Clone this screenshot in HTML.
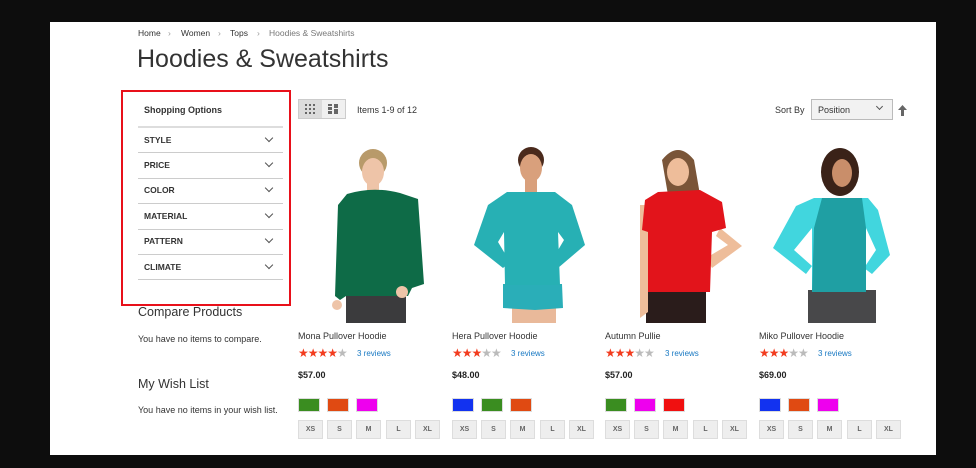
<!DOCTYPE html>
<html><head><meta charset="utf-8"><style>
*{margin:0;padding:0;box-sizing:border-box}
body{width:976px;height:468px;background:#0d0d0d;font-family:"Liberation Sans",sans-serif;color:#333;position:relative;overflow:hidden}
#pg{position:absolute;left:50px;top:22px;width:886px;height:433px;background:#fff}
.a{position:absolute;white-space:nowrap}
.crumb{top:28px;font-size:8.5px;color:#333}
.f{font-size:8.5px;font-weight:bold;color:#333}
.line{position:absolute;left:138px;width:145px;height:1px;background:#ccc}
.chev{position:absolute;left:266px;width:6px;height:6px;border-right:1.3px solid #555;border-bottom:1.3px solid #555;transform:rotate(45deg)}
.nm{font-size:9px;color:#333}
.rv{font-size:8px;color:#1979c3}
.pr{font-size:9px;font-weight:bold;color:#222}
.sw{position:absolute;width:22px;height:14px;top:398px;border:1px solid #ddd}
.sz{position:absolute;width:25px;height:19px;top:420px;background:#eee;border:1px solid #ddd;font-size:7px;font-weight:bold;color:#666;text-align:center;line-height:17px}
.st{font-size:12px;letter-spacing:-1px;color:#f23c1f}
</style></head><body>
<div id="pg"></div>
<div class="a crumb" style="left:138px">Home</div>
<div class="a crumb" style="left:168px;color:#999">›</div>
<div class="a crumb" style="left:181px">Women</div>
<div class="a crumb" style="left:218px;color:#999">›</div>
<div class="a crumb" style="left:230px">Tops</div>
<div class="a crumb" style="left:257px;color:#999">›</div>
<div class="a crumb" style="left:269px;color:#777">Hoodies &amp; Sweatshirts</div>
<div class="a" style="left:137px;top:45px;font-size:25px;color:#333;font-weight:300">Hoodies &amp; Sweatshirts</div>

<div class="a" style="left:121px;top:90px;width:170px;height:216px;border:2px solid #e8101a"></div>
<div class="a" style="left:144px;top:105px;font-size:9px;font-weight:bold;color:#333">Shopping Options</div>
<div class="line" style="top:126px;height:2px;background:#ddd"></div>
<div class="a f" style="left:144px;top:135px">STYLE</div><div class="chev" style="top:135px"></div>
<div class="line" style="top:152px"></div>
<div class="a f" style="left:144px;top:160px">PRICE</div><div class="chev" style="top:160px"></div>
<div class="line" style="top:178px"></div>
<div class="a f" style="left:144px;top:185px">COLOR</div><div class="chev" style="top:185px"></div>
<div class="line" style="top:203px"></div>
<div class="a f" style="left:144px;top:211px">MATERIAL</div><div class="chev" style="top:211px"></div>
<div class="line" style="top:229px"></div>
<div class="a f" style="left:144px;top:236px">PATTERN</div><div class="chev" style="top:236px"></div>
<div class="line" style="top:254px"></div>
<div class="a f" style="left:144px;top:262px">CLIMATE</div><div class="chev" style="top:262px"></div>
<div class="line" style="top:279px"></div>

<div class="a" style="left:138px;top:305px;font-size:12.5px;color:#333">Compare Products</div>
<div class="a" style="left:138px;top:334px;font-size:9px">You have no items to compare.</div>
<div class="a" style="left:138px;top:377px;font-size:12.5px;color:#333">My Wish List</div>
<div class="a" style="left:138px;top:405px;font-size:9px">You have no items in your wish list.</div>

<div class="a" style="left:298px;top:99px;width:48px;height:20px;border:1px solid #ccc;background:#f0f0f0"></div>
<div class="a" style="left:299px;top:100px;width:23px;height:18px;background:#dcdcdc"></div>
<svg class="a" style="left:305px;top:104px" width="10" height="10"><g fill="#666"><rect x="0" y="0" width="2" height="2"/><rect x="4" y="0" width="2" height="2"/><rect x="8" y="0" width="2" height="2"/><rect x="0" y="4" width="2" height="2"/><rect x="4" y="4" width="2" height="2"/><rect x="8" y="4" width="2" height="2"/><rect x="0" y="8" width="2" height="2"/><rect x="4" y="8" width="2" height="2"/><rect x="8" y="8" width="2" height="2"/></g></svg>
<svg class="a" style="left:328px;top:104px" width="10" height="10"><g fill="#666"><rect x="0" y="0" width="4" height="2"/><rect x="6" y="0" width="4" height="4"/><rect x="0" y="3" width="4" height="3"/><rect x="6" y="5" width="4" height="5"/><rect x="0" y="7" width="4" height="3"/></g></svg>
<div class="a" style="left:357px;top:105px;font-size:9px">Items 1-9 of 12</div>
<div class="a" style="left:775px;top:105px;font-size:9px">Sort By</div>
<div class="a" style="left:811px;top:99px;width:82px;height:21px;border:1px solid #bbb;background:#f2f2f2;font-size:9px;padding:5px 6px">Position</div>
<div class="a" style="left:877px;top:104px;width:5px;height:5px;border-right:1px solid #555;border-bottom:1px solid #555;transform:rotate(45deg)"></div>
<svg class="a" style="left:898px;top:105px" width="9" height="11"><path d="M4.5 0 L9 5 H6 V11 H3 V5 H0Z" fill="#666"/></svg>

<svg class="a" style="left:0;top:0" width="976" height="468">
<rect x="346" y="290" width="60" height="33" fill="#3b3b3d"/>
<ellipse cx="373" cy="163" rx="14" ry="14" fill="#b89a6a"/>
<ellipse cx="373" cy="172" rx="11" ry="14" fill="#eec4a8"/>
<rect x="367" y="182" width="12" height="12" fill="#eec4a8"/>
<path d="M347 194 Q373 186 400 193 L418 199 L424 284 L412 288 L408 296 L346 296 L340 300 L335 296 L338 205 Z" fill="#0e6b47"/>
<circle cx="337" cy="305" r="5" fill="#eec4a8"/><circle cx="402" cy="292" r="6" fill="#eec4a8"/>
<rect x="512" y="305" width="44" height="18" fill="#e9b99a"/>
<path d="M503 284 H562 L563 308 L535 310 L503 308 Z" fill="#2aaeb8"/>
<ellipse cx="531" cy="160" rx="13" ry="13" fill="#4a2a1c"/>
<ellipse cx="531" cy="168" rx="11" ry="14" fill="#d9a07c"/>
<rect x="525" y="178" width="12" height="14" fill="#d9a07c"/>
<path d="M507 192 L555 192 L572 205 L585 245 L558 268 L551 262 L564 240 L558 232 L560 285 L505 285 L504 232 L498 242 L510 262 L503 268 L474 245 L488 205 Z" fill="#27b0b4"/>
<rect x="646" y="290" width="60" height="33" fill="#2a1c1b"/>
<path d="M662 160 Q678 140 694 160 L706 230 L690 232 L680 195 L668 195 Z" fill="#7a5538"/>
<ellipse cx="678" cy="172" rx="11" ry="14" fill="#eebd9a"/>
<path d="M640 205 L648 205 L648 312 L640 318 Z" fill="#eebd9a"/>
<path d="M720 228 L742 246 L712 268 L706 258 L728 245 L716 236 Z" fill="#eebd9a"/>
<path d="M658 192 L700 190 L722 202 L726 228 L712 232 L710 292 L648 292 L648 232 L642 230 L645 200 Z" fill="#e2141b"/>
<rect x="808" y="290" width="68" height="33" fill="#48484a"/>
<ellipse cx="840" cy="172" rx="19" ry="24" fill="#3a2218"/>
<ellipse cx="842" cy="173" rx="10" ry="14" fill="#c98e6a"/>
<path d="M814 198 L868 198 L878 210 L890 255 L872 274 L864 268 L876 250 L866 228 L866 292 L812 292 L812 228 L794 250 L812 266 L806 274 L773 248 L796 206 Z" fill="#41d6de"/>
<path d="M822 198 L862 198 L866 228 L866 292 L812 292 L814 228 Z" fill="#1f9fa3"/>
</svg>

<div class="a nm" style="left:298px;top:331px">Mona Pullover Hoodie</div>
<div class="a nm" style="left:452px;top:331px">Hera Pullover Hoodie</div>
<div class="a nm" style="left:605px;top:331px">Autumn Pullie</div>
<div class="a nm" style="left:759px;top:331px">Miko Pullover Hoodie</div>
<div class="a st" style="left:298px;top:346px">★★★★<span style="color:#bbb">★</span></div>
<div class="a st" style="left:452px;top:346px">★★★<span style="color:#bbb">★★</span></div>
<div class="a st" style="left:605px;top:346px">★★★<span style="color:#bbb">★★</span></div>
<div class="a st" style="left:759px;top:346px">★★★<span style="color:#bbb">★★</span></div>
<div class="a rv" style="left:357px;top:349px">3 reviews</div>
<div class="a rv" style="left:511px;top:349px">3 reviews</div>
<div class="a rv" style="left:665px;top:349px">3 reviews</div>
<div class="a rv" style="left:818px;top:349px">3 reviews</div>
<div class="a pr" style="left:298px;top:370px">$57.00</div>
<div class="a pr" style="left:452px;top:370px">$48.00</div>
<div class="a pr" style="left:605px;top:370px">$57.00</div>
<div class="a pr" style="left:759px;top:370px">$69.00</div>

<div class="sw" style="left:298px;background:#3a8d20"></div><div class="sw" style="left:327px;background:#e04a12"></div><div class="sw" style="left:356px;background:#ee00ee"></div>
<div class="sw" style="left:452px;background:#1232f0"></div><div class="sw" style="left:481px;background:#3a8d20"></div><div class="sw" style="left:510px;background:#e04a12"></div>
<div class="sw" style="left:605px;background:#3a8d20"></div><div class="sw" style="left:634px;background:#ee00ee"></div><div class="sw" style="left:663px;background:#f01010"></div>
<div class="sw" style="left:759px;background:#1232f0"></div><div class="sw" style="left:788px;background:#e04a12"></div><div class="sw" style="left:817px;background:#ee00ee"></div>

<div class="sz" style="left:298px">XS</div><div class="sz" style="left:327px">S</div><div class="sz" style="left:356px">M</div><div class="sz" style="left:386px">L</div><div class="sz" style="left:415px">XL</div>
<div class="sz" style="left:452px">XS</div><div class="sz" style="left:481px">S</div><div class="sz" style="left:510px">M</div><div class="sz" style="left:540px">L</div><div class="sz" style="left:569px">XL</div>
<div class="sz" style="left:605px">XS</div><div class="sz" style="left:634px">S</div><div class="sz" style="left:663px">M</div><div class="sz" style="left:693px">L</div><div class="sz" style="left:722px">XL</div>
<div class="sz" style="left:759px">XS</div><div class="sz" style="left:788px">S</div><div class="sz" style="left:817px">M</div><div class="sz" style="left:847px">L</div><div class="sz" style="left:876px">XL</div>
</body></html>
